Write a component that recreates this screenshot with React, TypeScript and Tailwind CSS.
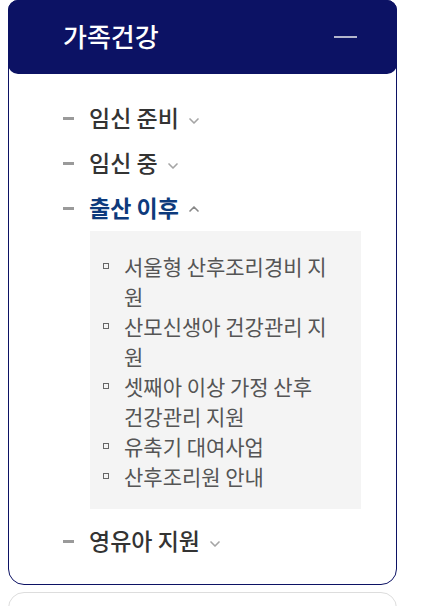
import { ChevronDown, ChevronUp } from 'lucide-react';

interface MenuItem {
  label: string;
  open?: boolean;
  children?: string[];
}

const menu: MenuItem[] = [
  { label: '임신 준비' },
  { label: '임신 중' },
  {
    label: '출산 이후',
    open: true,
    children: [
      '서울형 산후조리경비 지원',
      '산모신생아 건강관리 지원',
      '셋째아 이상 가정 산후 건강관리 지원',
      '유축기 대여사업',
      '산후조리원 안내',
    ],
  },
  { label: '영유아 지원' },
];

const MenuRow = ({ item }: { item: MenuItem }) => (
  <li>
    <div className="flex h-[45px] items-center">
      <span className="h-[3px] w-[11px] bg-[#9a9a9a]" />
      <span
        className={
          item.open
            ? 'ml-[15px] -mt-[2px] text-[23px] font-bold leading-[45px] text-[#0d3a7c]'
            : 'ml-[15px] -mt-[2px] text-[23px] font-medium leading-[45px] text-[#333333]'
        }
      >
        {item.label}
      </span>
      {item.open ? (
        <ChevronUp className="ml-[7px] h-[16px] w-[16px] text-[#888888]" strokeWidth={2.5} />
      ) : (
        <ChevronDown className="ml-[7px] mt-[4px] h-[16px] w-[16px] text-[#a5a5a5]" strokeWidth={2.5} />
      )}
    </div>
    {item.open && item.children && (
      <ul className="mb-[10px] ml-[27px] mr-[35px] bg-[#f4f4f4] pb-[18px] pl-[13px] pr-[26px] pt-[20px]">
        {item.children.map((c) => (
          <li key={c} className="flex text-[21px] leading-[30px] text-[#555555]">
            <span className="mt-[12px] h-[6px] w-[6px] shrink-0 border border-[#666666]" />
            <span className="ml-[15px]">{c}</span>
          </li>
        ))}
      </ul>
    )}
  </li>
);

export default function App() {
  return (
    <div
      className="min-h-[606px] bg-white"
      style={{ fontFamily: '"Noto Sans CJK KR", "Noto Sans", sans-serif' }}
    >
      <div className="ml-2 w-[389px]">
        <div className="rounded-b-2xl rounded-t-[10px] border border-[#0c1264]">
          <div className="-mx-px -mt-px flex h-[74px] items-center justify-between rounded-[10px] bg-[#0c1264] pl-[55px] pr-[40px]">
            <h2 className="mb-[3px] text-[26px] font-medium text-white">가족건강</h2>
            <span className="h-[2px] w-[23px] bg-[#b3b5cc]" />
          </div>
          <ul className="pb-[20px] pl-[54px] pt-[22px]">
            {menu.map((m) => (
              <MenuRow key={m.label} item={m} />
            ))}
          </ul>
        </div>
        <div className="mt-[7px] h-[40px] rounded-2xl border border-[#dddddd]" />
      </div>
    </div>
  );
}
